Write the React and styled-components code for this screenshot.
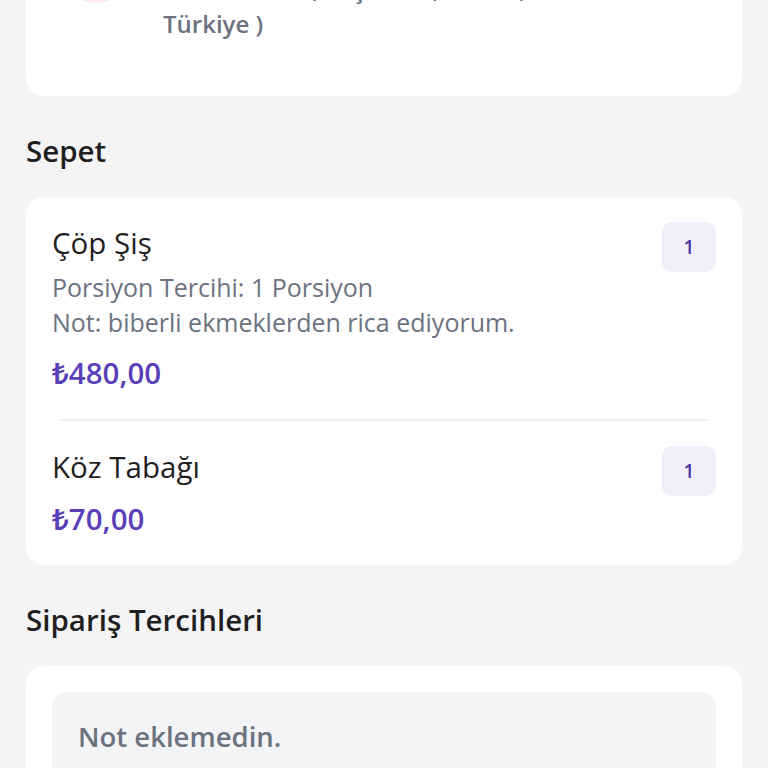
import React from "react";
import styled, { createGlobalStyle } from "styled-components";

const Global = createGlobalStyle`
  html, body { margin: 0; padding: 0; background: #f4f4f5; }
  body { font-family: "Open Sans", "Noto Sans", sans-serif; overflow: hidden; }
`;

const Page = styled.div`
  padding: 0 26px 40px;
  margin-top: -76px;
  display: flex;
  flex-direction: column;
`;

const Card = styled.div`
  background: #ffffff;
  border-radius: 18px;
  padding: ${(p) => p.$pad || "26px"};
`;

const AddressRow = styled.div`
  display: flex;
  gap: 35px;
`;

const PinCircle = styled.div`
  width: 64px;
  height: 64px;
  border-radius: 50%;
  background: #fde9ec;
  flex-shrink: 0;
  margin-top: 3px;
`;

const AddressText = styled.div`
  font-size: 24px;
  font-weight: 600;
  line-height: 35px;
  color: #6b7280;
`;

const SectionTitle = styled.h2`
  margin: 37px 0 28px;
  font-size: 29.5px;
  font-weight: 600;
  color: #1f1f1f;
  line-height: 36px;
`;

const Item = styled.div`
  display: flex;
  justify-content: space-between;
  align-items: flex-start;
  padding: ${(p) => (p.$first ? "0 0 26px" : "26px 0 0")};
  border-bottom: ${(p) => (p.$first ? "2px solid #f0f0f2" : "none")};
  margin: 0 8px;
`;

const ItemBody = styled.div`
  display: flex;
  flex-direction: column;
  margin-left: -8px;
`;

const ItemName = styled.div`
  font-size: 29.5px;
  line-height: 40px;
  color: #1f1f1f;
  margin-bottom: 7px;
`;

const ItemDetail = styled.div`
  font-size: 25px;
  line-height: 35px;
  color: #6b7280;
`;

const Price = styled.div`
  font-size: 29.5px;
  font-weight: 600;
  line-height: 40px;
  color: #5b3fb8;
  margin-top: ${(p) => (p.$afterDetail ? "13px" : "5px")};
`;

const Qty = styled.div`
  width: 54px;
  height: 50px;
  border-radius: 10px;
  background: #f1effb;
  color: #4b36a0;
  font-size: 19px;
  font-weight: 600;
  display: flex;
  align-items: center;
  justify-content: center;
  margin-right: -8px;
  margin-top: -1px;
`;

const NoteBox = styled.div`
  background: #f3f4f6;
  border-radius: 14px;
  padding: 27px 26px 30px;
  font-size: 27.5px;
  font-weight: 600;
  color: #6b7280;
  line-height: 36px;
  min-height: 60px;
`;

export default function App() {
  return (
    <>
      <Global />
      <Page>
        <Card $pad="12px 26px 55px 38px">
          <AddressRow>
            <PinCircle />
            <AddressText>
              Teslimat Adresi: Ev
              <br />
              Merkez Mah., Yeşil Sok., No: 12,
              <br />
              Türkiye )
            </AddressText>
          </AddressRow>
        </Card>

        <SectionTitle>Sepet</SectionTitle>
        <Card $pad="26px 26px 26px">
          <Item $first>
            <ItemBody>
              <ItemName>Çöp Şiş</ItemName>
              <ItemDetail>Porsiyon Tercihi: 1 Porsiyon</ItemDetail>
              <ItemDetail>Not: biberli ekmeklerden rica ediyorum.</ItemDetail>
              <Price $afterDetail>₺480,00</Price>
            </ItemBody>
            <Qty>1</Qty>
          </Item>
          <Item>
            <ItemBody>
              <ItemName>Köz Tabağı</ItemName>
              <Price>₺70,00</Price>
            </ItemBody>
            <Qty>1</Qty>
          </Item>
        </Card>

        <SectionTitle>Sipariş Tercihleri</SectionTitle>
        <Card>
          <NoteBox>Not eklemedin.</NoteBox>
        </Card>
      </Page>
    </>
  );
}
